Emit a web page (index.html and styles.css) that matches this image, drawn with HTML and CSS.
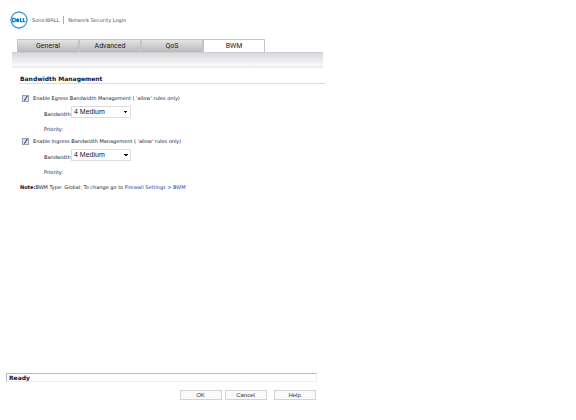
FILE: index.html
```html
<!DOCTYPE html>
<html lang="en">
<head>
    <meta charset="UTF-8">
    <meta name="viewport" content="width=device-width, initial-scale=1.0">
    <title>SonicWALL - Network Security Login</title>
    <link rel="stylesheet" href="styles.css">
</head>
<body>
    <div class="dialog">
        <header class="header">
            <svg class="logo" viewBox="0 0 18 18" aria-label="Dell">
                <circle cx="9" cy="9" r="8" fill="#fff" stroke="#3a9bd3" stroke-width="1.3"/>
                <g fill="none" stroke="#0f7fc4" stroke-width="1.2">
                    <path d="M2.7 7.3v3.5h1q1.8 0 1.8-1.75T3.7 7.3z"/>
                    <path d="M6.2 9l2-1.5M6.6 10.2l2.5-2M7.3 11l2-1.5M6.2 9l1.1 2"/>
                    <path d="M10.5 7v3.7h1.8M13.3 7v3.7h2"/>
                </g>
            </svg>
            <span class="brand">SonicWALL</span>
            <span class="product">Network Security Login</span>
        </header>

        <nav class="tabs">
            <button class="tab">General</button>
            <button class="tab">Advanced</button>
            <button class="tab">QoS</button>
            <button class="tab active">BWM</button>
        </nav>
        <div class="tab-bar"></div>

        <main class="content">
            <h1>Bandwidth Management</h1>
            <div class="check">
                <input type="checkbox" id="egress" checked>
                <label for="egress">Enable Egress Bandwidth Management ( 'allow' rules only)</label>
            </div>
            <div class="field">
                <label for="egressPriority">Bandwidth Priority:</label>
                <select id="egressPriority">
                    <option>4 Medium</option>
                </select>
            </div>
            <div class="check">
                <input type="checkbox" id="ingress" checked>
                <label for="ingress">Enable Ingress Bandwidth Management ( 'allow' rules only)</label>
            </div>
            <div class="field">
                <label for="ingressPriority">Bandwidth Priority:</label>
                <select id="ingressPriority">
                    <option>4 Medium</option>
                </select>
            </div>
            <p class="note"><b>Note:</b>BWM Type: Global; To change go to <a href="#">Firewall Settings &gt; BWM</a></p>
        </main>

        <footer class="footer">
            <div class="status">Ready</div>
            <div class="actions">
                <button>OK</button>
                <button>Cancel</button>
                <button class="help">Help</button>
            </div>
        </footer>
    </div>
</body>
</html>
```

FILE: styles.css
```css
* {
    box-sizing: border-box;
}
body {
    margin: 0;
    background: #fff;
    color: #222233;
    font-family: "DejaVu Sans", Verdana, sans-serif;
    font-size: 5px;
    line-height: 8px;
}
.dialog {
    display: flex;
    flex-direction: column;
    width: 56%;
    min-height: 100vh;
    padding: 10px 0 20px 6px;
}
.header {
    display: flex;
    align-items: center;
    height: 20px;
    padding-left: 4px;
    color: #555;
}
.logo {
    width: 18px;
    height: 18px;
}
.brand {
    margin-left: 4px;
    padding-right: 4px;
    border-right: 1px solid #aaa;
}
.product {
    margin-left: 4px;
}
.tabs {
    display: flex;
    height: 13px;
    margin: 9px 0 0 11px;
}
.tab {
    width: 62px;
    padding: 0;
    border: 1px solid #c4c4c4;
    border-bottom: none;
    border-radius: 1px 1px 0 0;
    background: linear-gradient(#e4e4e4, #b8b8b8);
    color: #222;
    font: 7px/10px Roboto, Arial, sans-serif;
}
.tab.active {
    background: #fff;
}
.tab-bar {
    height: 16px;
    margin-left: 6px;
    border-top: 1px solid #ccccdd;
    border-bottom: 2px solid #eee;
    background: linear-gradient(#d8d8d8, #fafafa);
}
.content {
    flex: 1;
    padding: 7px 0 0 14px;
}
h1 {
    margin: 0 -2px 9px 0;
    border-bottom: 1px solid #ddd;
    color: #111133;
    font: bold 6px/8px "DejaVu Sans", Verdana, sans-serif;
}
.check {
    display: flex;
    align-items: center;
    gap: 4px;
    height: 10px;
    padding-left: 2px;
}
.check input {
    appearance: none;
    width: 7px;
    height: 7px;
    margin: 0;
    border: 1px solid #98a2ac;
    background: #dde3ea;
}
.check input:checked {
    background: #dde3ea linear-gradient(120deg, transparent 40%, #5a6cae 45%, #5a6cae 60%, transparent 65%);
}
.field {
    display: flex;
    align-items: flex-start;
    height: 33px;
    padding: 3px 0 0 24px;
}
.field label {
    width: 27px;
    padding-top: 1px;
    line-height: 15px;
}
.field select {
    appearance: none;
    width: 60px;
    height: 12px;
    padding: 0 2px;
    border: 1px solid #ddd;
    background: #fff conic-gradient(from -45deg at 50% 100%, #111 90deg, transparent 0) no-repeat right 2px center / 4px 2px;
    color: #111133;
    font: 7px/10px "Liberation Sans", Arial, sans-serif;
}
.note {
    margin: 4px 0 0;
}
.note b {
    color: #111133;
}
a {
    color: #1a3fa0;
    text-decoration: none;
}
.status {
    height: 9px;
    margin-right: 6px;
    padding-left: 2px;
    border: 1px solid #eee;
    border-top-color: #bbb;
    border-left-color: #bbb;
    color: #111133;
    font: bold 6px/8px "DejaVu Sans", Verdana, sans-serif;
}
.actions {
    display: flex;
    justify-content: flex-end;
    gap: 3px;
    margin: 8px 7px 0 0;
}
.actions button {
    width: 42px;
    height: 10px;
    padding: 0;
    border: 1px solid #d4d4d4;
    background: #fafafa;
    color: #333355;
    font: 6px/8px "Liberation Sans", Arial, sans-serif;
}
.actions .help {
    margin-left: 4px;
}
.field select {
    background-image: conic-gradient(from 315deg at 50% 100%, #111 90deg, transparent 0);
}
```
